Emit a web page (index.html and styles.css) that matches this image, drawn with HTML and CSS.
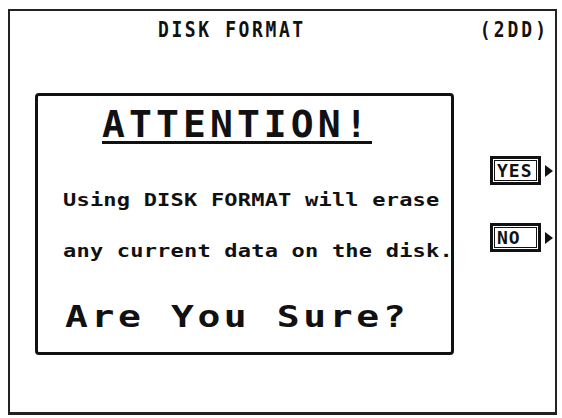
FILE: index.html
```html
<!DOCTYPE html>
<html>
<head>
<meta charset="utf-8">
<link rel="stylesheet" href="styles.css">
</head>
<body>
<div class="screen">
  <div class="header">
    <span class="title">DISK FORMAT</span>
    <span class="mode">(2DD)</span>
  </div>
  <div class="main">
    <div class="dialog">
      <div class="attention">ATTENTION!</div>
      <div class="line l1">Using DISK FORMAT will erase</div>
      <div class="line l2">any current data on the disk.</div>
      <div class="sure">Are You Sure?</div>
    </div>
    <div class="buttons">
      <div class="btn-row yes"><span class="btn">YES</span><span class="tri"></span></div>
      <div class="btn-row no"><span class="btn">NO</span><span class="tri"></span></div>
    </div>
  </div>
</div>
</body>
</html>
```
FILE: styles.css
```css
html, body {
  margin: 0;
  padding: 0;
  background: #fff;
}
body {
  width: 562px;
  height: 418px;
  overflow: hidden;
  color: #111;
  font-family: "DejaVu Sans Mono", monospace;
}
.screen {
  margin: 9px 0 0 8px;
  width: 549px;
  height: 406px;
  border: 2px solid #222;
  border-bottom-width: 3px;
  box-sizing: border-box;
}
.header {
  display: flex;
  align-items: center;
  height: 30px;
  padding-top: 6px;
  box-sizing: border-box;
}
.title {
  margin-left: 148px;
  font-weight: bold;
  font-size: 18px;
  letter-spacing: 2.6px;
  transform: scaleY(1.15);
}
.mode {
  margin-left: auto;
  margin-right: 6px;
  font-weight: bold;
  font-size: 18px;
  letter-spacing: 3px;
  transform: scaleY(1.15);
}
.main {
  display: flex;
  align-items: flex-start;
  margin-top: 52px;
}
.dialog {
  margin-left: 25px;
  width: 419px;
  height: 262px;
  border: 3px solid #111;
  border-radius: 4px;
  box-sizing: border-box;
  padding: 13px 0 0 25px;
}
.attention {
  margin-left: 39px;
  display: inline-block;
  font-weight: bold;
  font-size: 38px;
  line-height: 31px;
  letter-spacing: 4.1px;
  border-bottom: 3px solid #111;
  padding-bottom: 1px;
}
.line {
  font-size: 22px;
  line-height: 22px;
  letter-spacing: 0.2px;
  font-weight: bold;
  white-space: nowrap;
  transform: scaleY(0.82);
  transform-origin: left center;
}
.l1 { margin-top: 45px; }
.l2 { margin-top: 29px; }
.sure {
  margin-top: 37px;
  margin-left: 2px;
  font-weight: bold;
  font-size: 38px;
  line-height: 36px;
  letter-spacing: 3.6px;
  white-space: nowrap;
  transform: scaleY(0.8);
  transform-origin: left center;
}
.buttons {
  display: flex;
  flex-direction: column;
  margin-left: 36px;
  margin-top: 63px;
  gap: 38px;
}
.btn-row {
  display: flex;
  align-items: center;
  gap: 4px;
}
.btn {
  display: inline-block;
  width: 51px;
  height: 29px;
  box-sizing: border-box;
  border: 3px solid #111;
  padding-left: 4px;
  font-weight: bold;
  font-size: 18px;
  line-height: 23px;
  letter-spacing: 1px;
  box-shadow: inset 0 0 0 1px #fff, inset 0 0 0 2px #111;
}
.tri {
  width: 0;
  height: 0;
  border-top: 6px solid transparent;
  border-bottom: 6px solid transparent;
  border-left: 8px solid #111;
}
```
